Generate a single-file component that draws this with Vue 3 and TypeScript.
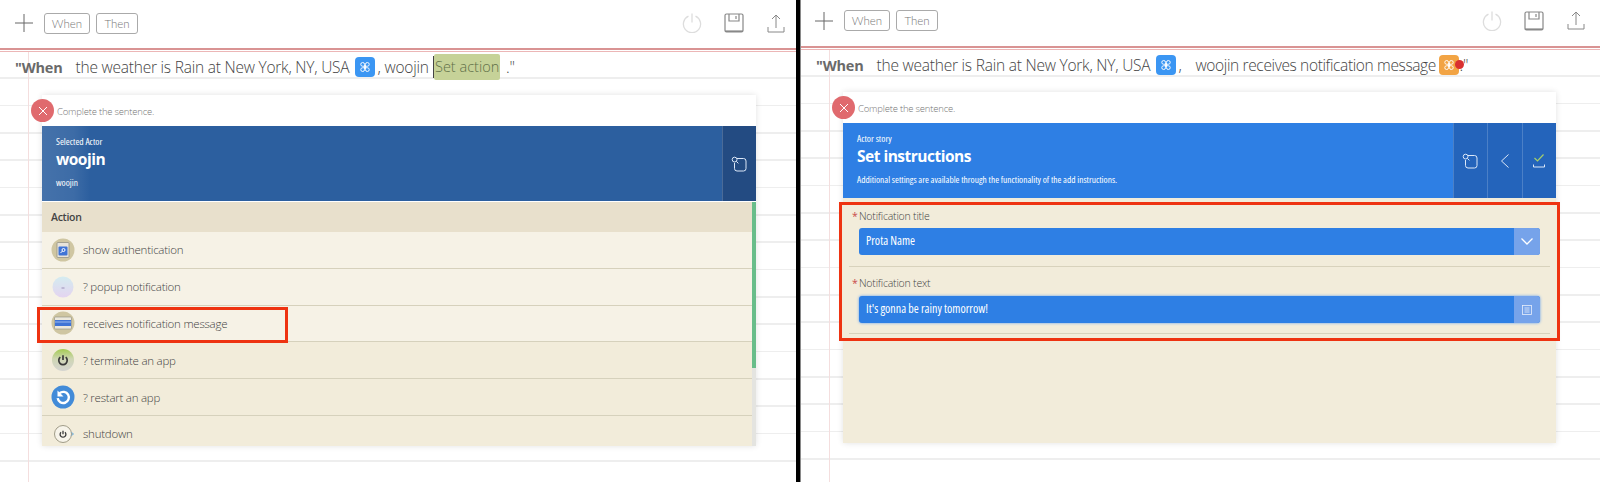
<script setup lang="ts">
interface Row { label: string; icon: string; tone: string }
const rows: Row[] = [
  { label: 'show authentication', icon: 'auth', tone: 'light' },
  { label: '? popup notification', icon: 'popup', tone: 'light' },
  { label: 'receives notification message', icon: 'notify', tone: 'light' },
  { label: '? terminate an app', icon: 'term', tone: 'dark' },
  { label: '? restart an app', icon: 'restart', tone: 'dark' },
  { label: 'shutdown', icon: 'shut', tone: 'dark' }
]
const loop = 'M7.5 7.5V5.2a2 2 0 1 0-2 2h5a2 2 0 1 0-2-2v5.6a2 2 0 1 0 2-2h-5a2 2 0 1 0 2 2z'
</script>

<template>
  <div class="screen">
    <section class="pane pane-left">
      <header class="toolbar">
        <svg class="plus" width="18" height="18" viewBox="0 0 18 18"><path d="M9 0v18M0 9h18" /></svg>
        <button class="tag">When</button>
        <button class="tag">Then</button>
        <span class="spacer"></span>
        <svg class="tool power" width="20" height="20" viewBox="0 0 20 20"><path d="M6.5 3.2a8.6 8.6 0 1 0 7 0M10 0.5v9" /></svg>
        <svg class="tool save" width="20" height="20" viewBox="0 0 20 20"><rect x="1" y="1" width="18" height="18" rx="1.5" /><path d="M5 1v7h10V1M12 3v3" /><path class="save-base" d="M1 18.2h18" /></svg>
        <svg class="tool upload" width="18" height="19" viewBox="0 0 18 19"><path d="M9 14V1M5 5l4-4 4 4M1 13v5h16v-5" /></svg>
      </header>
      <div class="rule"></div>
      <div class="sheet">
        <p class="sentence">
          <b class="when">"When</b>
          <span class="clause">the weather is Rain at New York, NY, USA</span>
          <svg class="badge blue" width="20" height="20" viewBox="0 0 16 16"><path :d="loop" /></svg>
          <span class="after-badge">, woojin</span>
          <span class="caret"></span>
          <span class="slot">Set action</span>
          <span class="end">."</span>
        </p>
        <div class="card">
          <div class="card-top">
            <span class="close"><svg width="10" height="10" viewBox="0 0 10 10"><path d="M1 1l8 8M9 1l-8 8" /></svg></span>
            <span class="hint">Complete the sentence.</span>
          </div>
          <div class="hero hero-actor">
            <div class="hero-copy">
              <div class="small">Selected Actor</div>
              <div class="title">woojin</div>
              <div class="desc">woojin</div>
            </div>
            <div class="hero-btn">
              <svg width="16" height="16" viewBox="0 0 16 16"><path d="M6 2.5h6.5a2.5 2.5 0 0 1 2.5 2.5v7.5a2.5 2.5 0 0 1-2.5 2.5H6a2.5 2.5 0 0 1-2.5-2.5V7" /><circle cx="3.6" cy="3.6" r="2.4" /><path d="M5.4 5.4l2 2" /></svg>
            </div>
          </div>
          <div class="list-wrap">
            <div class="list">
              <div class="list-head">Action</div>
              <div v-for="row in rows" :key="row.label" class="row" :class="row.tone">
                <svg class="row-icon" width="24" height="24" viewBox="0 0 24 24">
                  <defs>
                    <linearGradient id="term-grad" x1="0" y1="0" x2="0" y2="1">
                      <stop offset="0" stop-color="#a4cb52" />
                      <stop offset=".45" stop-color="#cfd6b4" />
                      <stop offset="1" stop-color="#d4d4d0" />
                    </linearGradient>
                    <linearGradient id="popup-grad" x1="0" y1="0" x2="0" y2="1">
                      <stop offset="0" stop-color="#d4ecf0" />
                      <stop offset="1" stop-color="#e4d4f0" />
                    </linearGradient>
                  </defs>
                  <template v-if="row.icon === 'auth'">
                    <circle cx="12" cy="12" r="11.5" fill="#cfc6a2" />
                    <rect x="6" y="4.5" width="12" height="15" rx="1" fill="#e8e4da" stroke="#8b8b80" stroke-width=".7" />
                    <rect x="7.5" y="8.5" width="9" height="9" rx="1" fill="#3f74d6" />
                    <circle cx="12.5" cy="12" r="1.5" fill="none" stroke="#fff" />
                    <path d="M11.5 13l-2 2" stroke="#fff" />
                  </template>
                  <template v-else-if="row.icon === 'popup'">
                    <circle cx="12" cy="12" r="10.5" fill="url(#popup-grad)" />
                    <path d="M10.5 13h3" stroke="#9c90b8" />
                  </template>
                  <template v-else-if="row.icon === 'notify'">
                    <circle cx="12" cy="12" r="11.5" fill="#cfc6a2" />
                    <rect x="3.5" y="6" width="17" height="12" rx="1" fill="#ece8dc" stroke="#8b8b80" stroke-width=".6" />
                    <rect x="4" y="9" width="16" height="6" fill="#3f74d6" />
                    <path d="M4 11h16" stroke="#9ab8ee" />
                  </template>
                  <template v-else-if="row.icon === 'term'">
                    <circle cx="12" cy="12" r="11" fill="url(#term-grad)" />
                    <path d="M9.3 9.2a4.2 4.2 0 1 0 5.4 0M12 7.2v4.8" fill="none" stroke="#3a3a3a" stroke-width="1.7" />
                  </template>
                  <template v-else-if="row.icon === 'restart'">
                    <circle cx="12" cy="12" r="11.5" fill="#428bd8" />
                    <path d="M8.6 8.2a5.6 5.6 0 1 1-1.9 5" fill="none" stroke="#fff" stroke-width="2.4" />
                    <path d="M6.5 5.5v6h6z" fill="#fff" />
                  </template>
                  <template v-else>
                    <circle cx="12" cy="12" r="8.5" fill="#f7f4ea" stroke="#a09c88" />
                    <path d="M10 10.2a2.9 2.9 0 1 0 4 0M12 8.8v3.4" fill="none" stroke="#3a3a3a" stroke-width="1.3" />
                    <path d="M20.5 10.5l2 1.5-2 1.5" fill="none" stroke="#6aa9d8" />
                  </template>
                </svg>
                <span class="row-text">{{ row.label }}</span>
              </div>
            </div>
            <div class="track"><div class="thumb"></div></div>
            <div class="mark"></div>
          </div>
        </div>
      </div>
    </section>

    <div class="divider"></div>

    <section class="pane pane-right">
      <header class="toolbar">
        <svg class="plus" width="18" height="18" viewBox="0 0 18 18"><path d="M9 0v18M0 9h18" /></svg>
        <button class="tag">When</button>
        <button class="tag">Then</button>
        <span class="spacer"></span>
        <svg class="tool power" width="20" height="20" viewBox="0 0 20 20"><path d="M6.5 3.2a8.6 8.6 0 1 0 7 0M10 0.5v9" /></svg>
        <svg class="tool save" width="20" height="20" viewBox="0 0 20 20"><rect x="1" y="1" width="18" height="18" rx="1.5" /><path d="M5 1v7h10V1M12 3v3" /><path class="save-base" d="M1 18.2h18" /></svg>
        <svg class="tool upload" width="18" height="19" viewBox="0 0 18 19"><path d="M9 14V1M5 5l4-4 4 4M1 13v5h16v-5" /></svg>
      </header>
      <div class="rule"></div>
      <div class="sheet">
        <p class="sentence">
          <b class="when">"When</b>
          <span class="clause">the weather is Rain at New York, NY, USA</span>
          <svg class="badge blue" width="20" height="20" viewBox="0 0 16 16"><path :d="loop" /></svg>
          <span class="after-badge">,</span>
          <span class="actor-clause">woojin receives notification message</span>
          <span class="badge-wrap">
            <svg class="badge orange" width="20" height="20" viewBox="0 0 16 16"><path :d="loop" /></svg>
            <i class="dot"></i>
          </span>
          <span class="end-tight">."</span>
        </p>
        <div class="card">
          <div class="card-top">
            <span class="close"><svg width="10" height="10" viewBox="0 0 10 10"><path d="M1 1l8 8M9 1l-8 8" /></svg></span>
            <span class="hint">Complete the sentence.</span>
          </div>
          <div class="hero hero-story">
            <div class="hero-copy">
              <div class="small">Actor story</div>
              <div class="title">Set instructions</div>
              <div class="desc">Additional settings are available through the functionality of the add instructions.</div>
            </div>
            <div class="hero-btn">
              <svg width="16" height="16" viewBox="0 0 16 16"><path d="M6 2.5h6.5a2.5 2.5 0 0 1 2.5 2.5v7.5a2.5 2.5 0 0 1-2.5 2.5H6a2.5 2.5 0 0 1-2.5-2.5V7" /><circle cx="3.6" cy="3.6" r="2.4" /><path d="M5.4 5.4l2 2" /></svg>
            </div>
            <div class="hero-btn">
              <svg width="16" height="16" viewBox="0 0 16 16"><path d="M11.5 1.5L4.5 8l7 6.5" /></svg>
            </div>
            <div class="hero-btn">
              <svg width="16" height="16" viewBox="0 0 16 16"><path d="M3.5 5l3 3 6-6.5" class="tick" /><path d="M2.5 11.5v2.5h11v-2.5" /></svg>
            </div>
          </div>
          <div class="story-body">
            <div class="form">
              <div class="field first">
                <label class="label"><span class="star">*</span>Notification title</label>
                <div class="input">
                  <span class="value">Prota Name</span>
                  <span class="addon"><svg width="14" height="9" viewBox="0 0 14 9"><path d="M1.5 1.5L7 7l5.5-5.5" /></svg></span>
                </div>
              </div>
              <div class="field second">
                <label class="label"><span class="star">*</span>Notification text</label>
                <div class="input glow">
                  <span class="value">It's gonna be rainy tomorrow!</span>
                  <span class="addon"><svg width="10" height="10" viewBox="0 0 10 10"><rect x=".5" y=".5" width="9" height="9" /><path d="M2.5 3h5M2.5 5h5M2.5 7h5" /></svg></span>
                </div>
              </div>
            </div>
          </div>
        </div>
      </div>
    </section>
  </div>
</template>

<style>
html, body { margin: 0; background: #fff; overflow: hidden; }
</style>

<style scoped>
.screen { display: flex; width: 1600px; height: 482px; background: #fff; font-family: "Open Sans", "Liberation Sans", sans-serif; color: #555; overflow: hidden; }
.pane { display: flex; flex-direction: column; height: 482px; box-sizing: border-box; }
.pane-left { width: 796px; }
.divider { width: 4px; background: #000; flex: none; }
.pane-right { width: 800px; border-left: 1px solid #8a8a8a; }

.toolbar { display: flex; align-items: center; flex: none; }
.pane-left .toolbar { height: 46px; margin-bottom: 2px; padding: 0 11px 0 15px; }
.pane-right .toolbar { height: 41px; margin-bottom: 5px; padding: 0 15px 0 14px; }
.spacer { flex: 1; }
.plus { fill: none; stroke: #666; stroke-width: 1; margin-right: 11px; flex: none; }
.tag { width: 46px; height: 21px; box-sizing: border-box; padding: 0; margin-right: 6px; background: #fff; border: 1px solid #aaa; border-radius: 3px; font: 300 11.5px "Lato", sans-serif; color: #777; }
.tag + .tag { width: 42px; margin-right: 0; }
.tool { fill: none; stroke-width: 1; flex: none; }
.power { stroke: #ddd; stroke-width: 1.3; margin-right: 22px; }
.save { stroke: #888; stroke-width: 1.2; margin-right: 23px; }
.save-base { stroke-width: 1.6; }
.upload { stroke: #888; }

.rule { height: 4px; box-sizing: border-box; border-top: 2px solid #d99393; border-bottom: 1px solid #ecb6b6; flex: none; }
.sheet {
  flex: 1;
  background:
    linear-gradient(#f4dede, #f4dede) 28px 0 / 1px 100% no-repeat,
    repeating-linear-gradient(to bottom, transparent 0, transparent 25.5px, #eee 25.5px, #eee 27px, transparent 27px, transparent 27.33px);
}
.sentence { display: flex; align-items: center; height: 30px; margin: 0; padding-left: 15px; font-size: 15.5px; letter-spacing: -0.22px; font-weight: 300; color: #444; white-space: nowrap; }
.when { font-weight: 700; font-size: 14.5px; letter-spacing: -0.2px; color: #6a6a6a; width: 60.5px; flex: none; }
.clause { width: 274px; flex: none; }
.badge { border-radius: 4px; flex: none; margin-left: 5px; fill: none; stroke: #fff; stroke-width: 1; padding: 2.5px; box-sizing: border-box; }
.badge.blue { background: #3b96f3; }
.badge.orange { background: #f2a444; margin-left: 0; display: block; }
.after-badge { margin-left: 3px; }
.caret { width: 1px; height: 22px; background: #444; flex: none; }
.slot { width: 66px; height: 26px; line-height: 26px; background: #c6d298; color: #5f6f47; border-radius: 2px; box-sizing: border-box; padding-left: 1px; flex: none; font-size: 14.5px; letter-spacing: 0; }
.end { margin-left: 6px; }
.pane-left .after-badge { width: 55.5px; }
.actor-clause { margin-left: 14px; width: 238px; flex: none; letter-spacing: -0.36px; }
.badge-wrap { position: relative; margin-left: 5px; flex: none; }
.dot { position: absolute; right: -5px; top: 5px; width: 9px; height: 9px; border-radius: 50%; background: #d93030; }
.end-tight { margin-left: 1px; }
.pane-right .after-badge { width: 3px; }

.card { position: relative; width: 714px; margin-left: 42px; background: #fff; box-shadow: 0 0 6px rgba(0, 0, 0, 0.12); }
.pane-left .card { margin-top: 13px; }
.pane-right .card { margin-top: 12px; width: 713px; }
.card-top { height: 31px; display: flex; align-items: center; padding-left: 15px; box-sizing: border-box; padding-top: 2px; }
.close { position: absolute; left: -11px; top: 4px; width: 23px; height: 23px; border-radius: 50%; background: #e06a6e; display: flex; align-items: center; justify-content: center; }
.close svg { fill: none; stroke: #fff; stroke-width: 1; }
.hint { font-size: 9.5px; letter-spacing: -0.2px; font-weight: 300; color: #777; }

.hero { height: 75px; display: flex; color: #fff; box-sizing: border-box; }
.hero-actor { background: linear-gradient(90deg, rgba(255,255,255,0.12), rgba(255,255,255,0.08) 32px, rgba(255,255,255,0) 48px), #2c5f9f; }
.hero-story { background: #2e7fe4; }
.hero-copy { flex: 1; padding: 10px 0 0 14px; min-width: 0; }
.small { font-size: 9.5px; line-height: 12px; font-stretch: 80%; }
.title { font-size: 15.5px; font-weight: 700; line-height: 22px; letter-spacing: -0.5px; }
.desc { font-size: 9.4px; line-height: 14px; margin-top: 6px; font-stretch: 80%; }
.hero-btn { width: 34.5px; display: flex; align-items: center; justify-content: center; flex: none; border-left: 1px solid rgba(255, 255, 255, 0.18); box-sizing: border-box; }
.hero-actor .hero-btn { background: #234b82; }
.hero-story .hero-btn { background: #2464bb; }
.hero-btn svg { fill: none; stroke: #dce8f8; stroke-width: 1; }
.hero-btn .tick { stroke: #a6cf6a; stroke-width: 1.2; }

.list-wrap { position: relative; display: flex; margin-top: 1px; height: 244px; }
.list { flex: 1; overflow: hidden; }
.list-head { height: 30px; line-height: 30px; padding-left: 9px; background: #e8e0cc; font-size: 10.5px; letter-spacing: -0.3px; font-weight: 600; color: #444; }
.row { height: 36.8px; display: flex; align-items: center; box-sizing: border-box; border-bottom: 1px solid #d6d1bc; padding-left: 9px; }
.row.light { background: #f6f2e6; }
.row.dark { background: #f2ecda; }
.row-icon { flex: none; margin-right: 8px; }
.row-text { font-size: 11.5px; letter-spacing: -0.24px; font-weight: 300; color: #444; }
.track { width: 4px; background: #e4e4e0; flex: none; }
.thumb { height: 166px; background: #68bd8a; }
.mark { position: absolute; left: -5px; top: 105px; width: 251px; height: 36px; box-sizing: border-box; border: 3px solid #ee3311; pointer-events: none; }

.story-body { height: 245px; background: #f2ecda; padding-top: 4px; box-sizing: border-box; }
.form { margin: 0 -4px; border: 3px solid #ee3311; height: 139px; box-sizing: border-box; background: #f2ecda; padding: 0 7px; }
.field { border-bottom: 1px solid #d8d2bc; }
.field.first { padding: 3px 0 11px; }
.field.second { padding: 8px 0 10px; }
.label { display: flex; align-items: center; height: 16px; font-size: 10.5px; letter-spacing: -0.2px; font-weight: 300; color: #444; padding-left: 3px; }
.star { width: 7px; color: #c94a4a; font-weight: 400; }
.first .label { margin-bottom: 4px; }
.second .label { margin-bottom: 5px; }
.input { height: 27px; margin: 0 10px; display: flex; background: #2e7fe4; border-radius: 3px; overflow: hidden; color: #fff; font-size: 12px; font-stretch: 80%; }
.input.glow { box-shadow: 0 0 3px #5f9df0; }
.value { flex: 1; line-height: 25px; padding-left: 7px; }
.addon { width: 26px; background: #76a3ea; display: flex; align-items: center; justify-content: center; flex: none; }
.addon svg { fill: none; stroke: #fff; stroke-width: 1.3; }
.glow .addon svg { stroke-width: .8; stroke: #e8eefb; }
</style>
